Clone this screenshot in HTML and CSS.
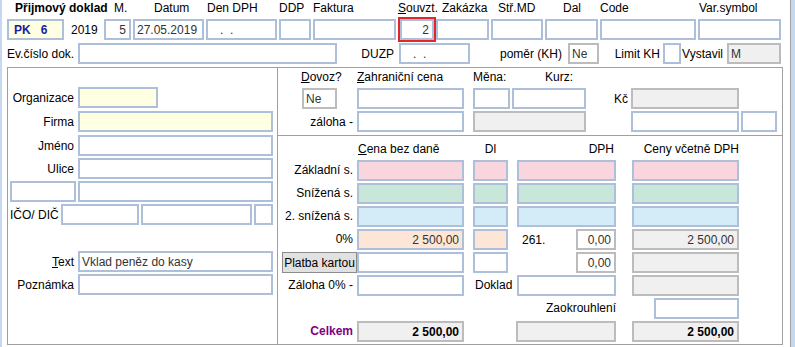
FILE: index.html
```html
<!DOCTYPE html>
<html lang="cs">

<head>
    <meta charset="UTF-8">
    <title>Příjmový doklad</title>
    <link rel="stylesheet" href="styles.css">
</head>

<body>
    <div class="window">
        <div class="edge-l"></div>
        <div class="page">
            <!-- header labels -->
            <div class="top-labels">
                <span class="tl-doklad">Přijmový doklad</span>
                <span class="tl-m">M.</span>
                <span class="tl-datum">Datum</span>
                <span class="tl-den">Den DPH</span>
                <span class="tl-ddp">DDP</span>
                <span class="tl-fakt">Faktura</span>
                <span class="tl-souv"><u>S</u>ouvzt.</span>
                <span class="tl-zak">Zakázka</span>
                <span class="tl-str">Stř.MD</span>
                <span class="tl-dal">Dal</span>
                <span class="tl-code">Code</span>
                <span>Var.symbol</span>
            </div>
            <div class="top-fields">
                <input class="fld yellow doc-no w57" value="PK   6">
                <span class="year">2019</span>
                <input class="fld num w27" value="5">
                <input class="fld w71" value="27.05.2019">
                <input class="fld w71" value="   .  .">
                <input class="fld w32">
                <input class="fld w83">
                <div class="focus-ring"><input class="fld num w34" value="2"></div>
                <input class="fld w53">
                <input class="fld w52">
                <input class="fld w53">
                <input class="fld w96">
                <input class="fld w83">
            </div>
            <div class="second-row">
                <span class="ev-lbl">Ev.číslo dok.</span>
                <input class="fld w259">
                <span class="rl w62">DUZP</span>
                <input class="fld w71" value="   .  .">
                <span class="rl w98">poměr (KH)</span>
                <input class="fld grey-b w31" value="Ne">
                <span class="rl w64 pr3">Limit KH</span>
                <input class="fld w18">
                <span class="rl w46 pr4">Vystavil</span>
                <input class="fld ro w54" value="M">
            </div>

            <div class="main">
                <div class="panel-left">
                    <div class="row r-org"><label class="lbl">Organizace</label><input class="fld yellow w80"></div>
                    <div class="row g3"><label class="lbl">Firma</label><input class="fld yellow w195"></div>
                    <div class="row g3"><label class="lbl">Jméno</label><input class="fld w195"></div>
                    <div class="row g2"><label class="lbl">Ulice</label><input class="fld w195"></div>
                    <div class="row g2"><input class="fld zip w66"><input class="fld w195"></div>
                    <div class="row g2 ico">
                        <label class="ico-lbl">IČO/ DIČ</label>
                        <input class="fld w78"><input class="fld w111"><input class="fld w19">
                    </div>
                    <div class="row r-text"><label class="lbl"><u>T</u>ext</label><input class="fld w195" value="Vklad peněz do kasy"></div>
                    <div class="row g2"><label class="lbl">Poznámka</label><input class="fld w195"></div>
                </div>

                <div class="panel-right">
                    <div class="foreign">
                        <div class="f-labels">
                            <span class="fl-dovoz"><u>D</u>ovoz?</span>
                            <span class="fl-cena"><u>Z</u>ahraniční cena</span>
                            <span class="fl-mena">Měna:</span>
                            <span>Kurz:</span>
                        </div>
                        <div class="f-row">
                            <span class="f-lead"><input class="fld grey-b w35 ne" value="Ne"></span>
                            <input class="fld w107">
                            <input class="fld w37 ml9">
                            <input class="fld w74">
                            <span class="kc">Kč</span>
                            <input class="fld ro w108">
                        </div>
                        <div class="f-row">
                            <span class="f-lead rl">záloha -</span>
                            <input class="fld w107">
                            <input class="fld ro w113 ml9">
                            <span class="kc"></span>
                            <input class="fld w108">
                            <input class="fld w36">
                        </div>
                    </div>

                    <div class="tax">
                        <span class="k1 hd hd-l"><u>C</u>ena bez daně</span>
                        <span class="k2 hd hd-c">Dl</span>
                        <span class="k3 hd hd-r">DPH</span>
                        <span class="k4 hd hd-r0">Ceny včetně DPH</span>

                        <span class="k0 t-lbl">Základní s.</span>
                        <input class="k1 fld pink">
                        <input class="k2 fld pink">
                        <input class="k3 fld pink">
                        <input class="k4 fld pink">

                        <span class="k0 t-lbl">Snížená s.</span>
                        <input class="k1 fld green">
                        <input class="k2 fld green">
                        <input class="k3 fld green">
                        <input class="k4 fld green">

                        <span class="k0 t-lbl">2. snížená s.</span>
                        <input class="k1 fld blue">
                        <input class="k2 fld blue">
                        <input class="k3 fld blue">
                        <input class="k4 fld blue">

                        <span class="k0 t-lbl">0%</span>
                        <input class="k1 fld peach num" value="2 500,00">
                        <input class="k2 fld peach">
                        <div class="k3 vat-cell"><span class="vat-no">261.</span><input class="fld grey-b num w40" value="0,00"></div>
                        <input class="k4 fld ro num" value="2 500,00">

                        <button class="k0 card-btn">Platba kartou</button>
                        <input class="k1 fld">
                        <input class="k2 fld">
                        <input class="k3 fld grey-b num w40 end" value="0,00">
                        <input class="k4 fld ro">

                        <span class="k0 t-lbl">Záloha 0% -</span>
                        <input class="k1 fld">
                        <span class="k2 doklad">Doklad</span>
                        <input class="k3 fld">
                        <input class="k4 fld ro">

                        <span class="k-wide t-lbl">Zaokrouhlení</span>
                        <input class="k4 fld w85 end">

                        <span class="k0 t-lbl total-lbl">Celkem</span>
                        <input class="k1 fld ro num bold" value="2 500,00">
                        <input class="k3 fld ro w100 end">
                        <input class="k4 fld ro num bold" value="2 500,00">
                    </div>
                </div>
            </div>
        </div>
        <div class="edge-r"></div>
    </div>
</body>

</html>
```

FILE: styles.css
```css
* {
    box-sizing: border-box;
}

body {
    margin: 0;
    font-family: "Liberation Sans", Arial, sans-serif;
    font-size: 12px;
    color: #000;
    background-color: #fff;
}

.window {
    display: flex;
    height: 347px;
    overflow: hidden;
}

.edge-l {
    width: 2px;
    background-color: #c5d8ef;
}

.edge-r {
    width: 5px;
    border-left: 1px solid #a0a0a0;
    background-color: #c5d8ef;
}

.page {
    width: 788px;
    padding-left: 5px;
}

/* fields */
.fld {
    height: 21px;
    margin: 0;
    padding: 0 2px;
    border: 2px solid #aec0d9;
    background-color: #fff;
    font-family: "Liberation Sans", Arial, sans-serif;
    font-size: 12px;
    color: #333;
    outline: none;
}

.num {
    text-align: right;
    padding-right: 3px;
}

.bold {
    font-weight: bold;
    color: #000;
}

.ro {
    background-color: #f0f0f0;
    border-color: #bcbcbc;
}

.grey-b {
    border-color: #bcbcbc;
}

.yellow {
    background-color: #ffffe1;
}

.pink {
    background-color: #f9d5de;
}

.green {
    background-color: #c9e7d9;
}

.blue {
    background-color: #d4ebf8;
}

.peach {
    background-color: #fde6d6;
}

.w18 { width: 18px; }
.w19 { width: 19px; }
.w27 { width: 27px; }
.w31 { width: 31px; }
.w32 { width: 32px; }
.w34 { width: 34px; }
.w35 { width: 35px; }
.w36 { width: 36px; }
.w37 { width: 37px; }
.w40 { width: 40px; }
.w52 { width: 52px; }
.w53 { width: 53px; }
.w54 { width: 54px; }
.w57 { width: 57px; }
.w66 { width: 66px; }
.w71 { width: 71px; }
.w74 { width: 74px; }
.w78 { width: 78px; }
.w80 { width: 80px; }
.w83 { width: 83px; }
.w85 { width: 85px; }
.w96 { width: 96px; }
.w100 { width: 100px; }
.w107 { width: 107px; }
.w108 { width: 108px; }
.w111 { width: 111px; }
.w113 { width: 113px; }
.w195 { width: 195px; }
.w259 { width: 259px; }

/* top rows */
.top-labels {
    display: flex;
    height: 16px;
    line-height: 16px;
    padding-left: 8px;
    white-space: nowrap;
}

.tl-doklad { width: 99px; font-weight: bold; }
.tl-m { width: 40px; }
.tl-datum { width: 53px; }
.tl-den { width: 72px; }
.tl-ddp { width: 34px; }
.tl-fakt { width: 85px; }
.tl-souv { width: 44px; }
.tl-zak { width: 56px; }
.tl-str { width: 65px; }
.tl-dal { width: 37px; }
.tl-code { width: 99px; }

.top-fields {
    display: flex;
    align-items: center;
    gap: 2px;
    height: 21px;
    margin-top: 3px;
}

.doc-no {
    font-weight: bold;
    color: #1c1ca6;
    padding-left: 5px;
}

.year {
    width: 36px;
    padding-left: 5px;
}

.focus-ring {
    height: 25px;
    width: 38px;
    border: 2px solid #e3262a;
    margin-right: -2px;
    flex-shrink: 0;
}

.second-row {
    display: flex;
    align-items: center;
    height: 21px;
    margin-top: 3px;
    white-space: nowrap;
}

.ev-lbl {
    width: 71px;
}

.rl {
    text-align: right;
    padding-right: 5px;
}

.w62 { width: 62px; }
.w98 { width: 98px; padding-right: 6px; }
.w64 { width: 64px; }
.w46 { width: 46px; }
.pr3 { padding-right: 3px; }
.pr4 { padding-right: 4px; }

/* main area */
.main {
    display: grid;
    grid-template-columns: 270px 504px;
    width: 776px;
    height: 278px;
    margin-top: 3px;
    border: 1px solid #a0a0a0;
}

.panel-left {
    border-right: 1px solid #a0a0a0;
    padding-top: 19px;
}

.row {
    display: flex;
    align-items: center;
    height: 21px;
    gap: 2px;
}

.g2 { margin-top: 2px; }
.g3 { margin-top: 3px; }
.r-text { margin-top: 26px; }

.lbl {
    width: 66px;
    margin-right: 2px;
    text-align: right;
}

.zip {
    margin-left: 2px;
}

.ico-lbl {
    width: 49px;
    margin-left: 2px;
    white-space: nowrap;
}

/* right side */
.foreign {
    height: 68px;
    border-bottom: 1px solid #a0a0a0;
    padding-top: 1px;
}

.f-labels {
    display: flex;
    height: 16px;
    line-height: 16px;
    padding-left: 23px;
}

.fl-dovoz { width: 56px; }
.fl-cena { width: 116px; }
.fl-mena { width: 72px; }

.f-row {
    display: flex;
    align-items: center;
    height: 21px;
    margin-top: 2px;
}

.f-labels + .f-row {
    margin-top: 3px;
}

.f-row .fld + .fld {
    margin-left: 2px;
}

.f-row .fld.ml9 {
    margin-left: 9px;
}

.f-lead {
    width: 79px;
    padding-left: 24px;
}

.f-lead.rl {
    padding-right: 4px;
}

.kc {
    width: 45px;
    text-align: right;
    padding-right: 3px;
}

.ne {
    color: #333;
}

.tax {
    display: grid;
    grid-template-columns: 75px 107px 9px 35px 9px 99px 16px 107px;
    grid-template-rows: 17px;
    grid-auto-rows: 21px;
    row-gap: 2px;
    padding: 5px 0 0 4px;
    white-space: nowrap;
}

.tax .fld {
    width: 100%;
}

.tax .fld.w40 { width: 40px; }
.tax .fld.w85 { width: 85px; }
.tax .fld.w100 { width: 100px; }

.k0 { grid-column: 1; }
.k1 { grid-column: 2; }
.k2 { grid-column: 4; }
.k3 { grid-column: 6; }
.k4 { grid-column: 8; }
.k-wide { grid-column: 1 / 7; padding-right: 0; }

.end {
    justify-self: end;
}

.hd {
    line-height: 17px;
}

.hd-l { padding-left: 1px; }
.hd-c { text-align: center; }
.hd-r { text-align: right; padding-right: 2px; }
.hd-r0 { text-align: right; }

.t-lbl {
    line-height: 21px;
    text-align: right;
    padding-right: 4px;
}

.k-wide.t-lbl {
    padding-right: 0;
}

.total-lbl {
    color: #800080;
    font-weight: bold;
}

.vat-cell {
    display: flex;
    align-items: center;
    justify-content: space-between;
}

.vat-no {
    padding-left: 5px;
}

.card-btn {
    width: 75px;
    height: 21px;
    margin: 0;
    padding: 0;
    border: 1px solid #8c8c8c;
    background-color: #e1e1e1;
    font-family: "Liberation Sans", Arial, sans-serif;
    font-size: 12px;
    color: #000;
    white-space: nowrap;
    overflow: hidden;
}

.doklad {
    line-height: 21px;
    padding-left: 2px;
    overflow: visible;
}
```
